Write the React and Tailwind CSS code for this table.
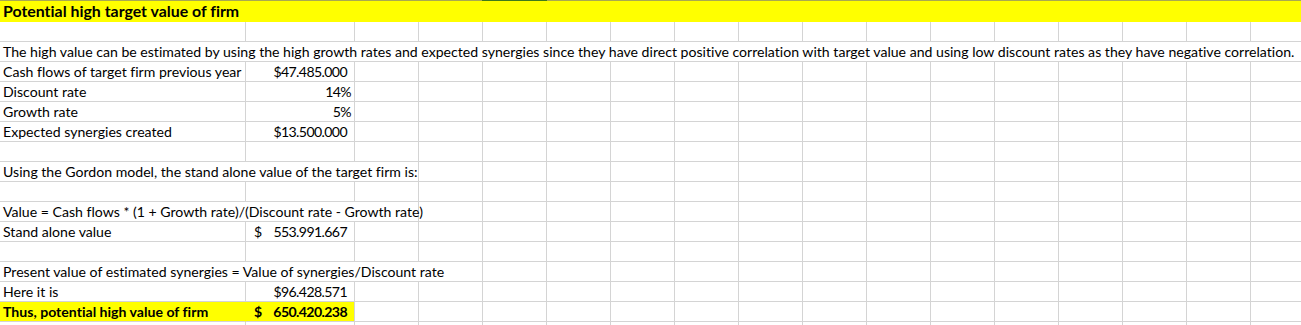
import React from "react";

const GRID = "grid grid-cols-[246px_109px_repeat(15,64px)]";
const CELL = "border-r border-b border-[#d4d4d4] flex items-end whitespace-nowrap pb-[1px] leading-[17px]";
const NUM = "tracking-[-0.6px]";

function Empties({ n }) {
  return Array.from({ length: n }).map((_, i) => <div key={i} className={CELL} />);
}

function Row({ children, used }) {
  return (
    <div className={`${GRID} h-[20px]`}>
      {children}
      <Empties n={17 - used} />
    </div>
  );
}

function LabelValue({ label, value, pct }) {
  return (
    <Row used={2}>
      <div className={`${CELL} pl-[3px]`}>{label}</div>
      <div className={`${CELL} justify-end ${NUM} ${pct ? "pr-[3px]" : "pr-[7px]"}`}>{value}</div>
    </Row>
  );
}

function Accounting({ label, value, bold, yellow }) {
  const bg = yellow ? "bg-[#ffff00]" : "";
  return (
    <Row used={2}>
      <div className={`${CELL} pl-[3px] ${bg} ${yellow ? "border-r-[#ffff00]" : ""} ${bold ? "font-bold" : ""}`}>{label}</div>
      <div className={`${CELL} justify-between pl-[8px] pr-[7px] ${bg} ${bold ? "font-bold" : ""}`}>
        <span>$</span>
        <span className={NUM}>{value}</span>
      </div>
    </Row>
  );
}

function Span({ text, span }) {
  const cls = { 3: "col-span-3", 4: "col-span-4", 17: "col-span-17 border-r-0" }[span];
  return (
    <Row used={span}>
      <div className={`${CELL} ${cls} pl-[3px]`}>{text}</div>
    </Row>
  );
}

export default function App() {
  return (
    <div className="w-[1301px] h-[325px] overflow-hidden bg-white text-black font-['Lato',sans-serif] text-[14.1px] [font-variant-ligatures:none]">
      <div className="flex h-[1px]">
        <div className="w-[482px] bg-[#a9a951]" />
        <div className="w-[65px] bg-[#3f7a1c]" />
        <div className="flex-1 bg-[#a9a951]" />
      </div>
      <div className="h-[21px] bg-[#ffff00] flex items-end pl-[3px] pb-[2px] leading-[19px] text-[15.9px] font-bold whitespace-nowrap">
        Potential high target value of firm
      </div>
      <Row used={0} />
      <Span
        span={17}
        text="The high value can be estimated by using the high growth rates and expected synergies since they have direct positive correlation with target value and using low discount rates as they have negative correlation."
      />
      <LabelValue label="Cash flows of target firm previous year" value="$47.485.000" />
      <LabelValue label="Discount rate" value="14%" pct />
      <LabelValue label="Growth rate" value="5%" pct />
      <LabelValue label="Expected synergies created" value="$13.500.000" />
      <Row used={0} />
      <Span span={3} text="Using the Gordon model, the stand alone value of the target firm is:" />
      <Row used={0} />
      <Span span={3} text="Value = Cash flows * (1 + Growth rate)/(Discount rate - Growth rate)" />
      <Accounting label="Stand alone value" value="553.991.667" />
      <Row used={0} />
      <Span span={4} text="Present value of estimated synergies = Value of synergies/Discount rate" />
      <LabelValue label="Here it is" value="$96.428.571" />
      <Accounting label="Thus, potential high value of firm" value="650.420.238" bold yellow />
      <Row used={0} />
    </div>
  );
}
